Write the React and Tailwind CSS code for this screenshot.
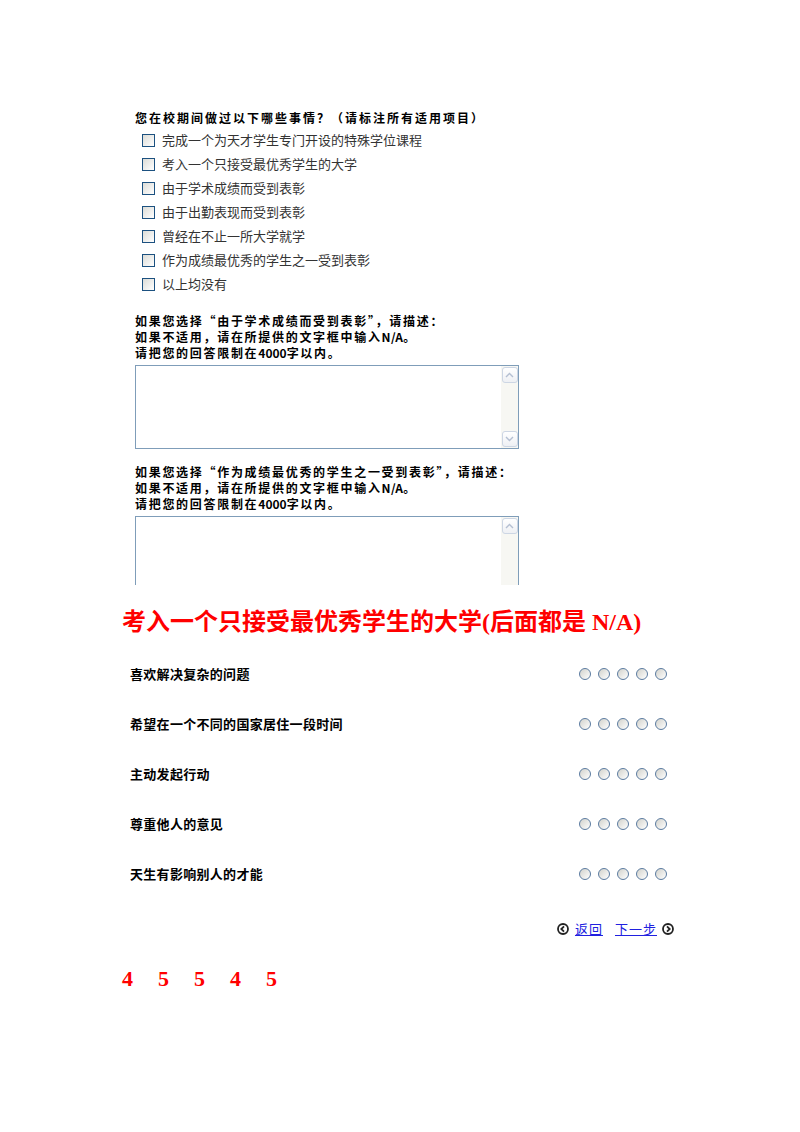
import React from "react";

const cjk = { fontFamily: '"Noto Sans CJK SC", "Liberation Sans", sans-serif' };
const serif = { fontFamily: '"Liberation Serif", "Noto Sans CJK SC", serif' };

function Checkbox() {
  return (
    <span className="inline-block w-[13px] h-[13px] border border-[#1c5180] bg-gradient-to-br from-[#dcdcd7] to-white shrink-0" />
  );
}

function Radio() {
  return (
    <span className="inline-block w-[12px] h-[12px] rounded-full border border-[#5b7ba0] bg-gradient-to-br from-[#d2d2cc] to-white shrink-0" />
  );
}

function ScrollBtn({ dir }) {
  return (
    <div className="w-[16px] h-[16px] rounded-[3px] border border-[#cdd6e4] bg-gradient-to-b from-white to-[#eef0f4] flex items-center justify-center">
      <svg width="9" height="6" viewBox="0 0 9 6">
        {dir === "up" ? (
          <path d="M1 5 L4.5 1.5 L8 5" fill="none" stroke="#b4bfd2" strokeWidth="1.4" />
        ) : (
          <path d="M1 1 L4.5 4.5 L8 1" fill="none" stroke="#b4bfd2" strokeWidth="1.4" />
        )}
      </svg>
    </div>
  );
}

function TextBox({ clipped }) {
  return (
    <div
      className={
        "w-[384px] flex justify-end border-[#7f9db9] " +
        (clipped ? "h-[69px] border-t border-l border-r" : "h-[84px] border")
      }
    >
      <div className="w-[17px] h-full bg-[#f7f7f3] flex flex-col justify-between items-center pt-[1px] pb-[1px]">
        <ScrollBtn dir="up" />
        {!clipped && <ScrollBtn dir="down" />}
      </div>
    </div>
  );
}

function NavIcon({ dir }) {
  return (
    <svg width="12" height="12" viewBox="0 0 12 12">
      <circle cx="6" cy="6" r="5" fill="white" stroke="#222" strokeWidth="1.8" />
      {dir === "left" ? (
        <path d="M7 3.3 L4.3 6 L7 8.7" fill="none" stroke="#222" strokeWidth="1.8" />
      ) : (
        <path d="M5 3.3 L7.7 6 L5 8.7" fill="none" stroke="#222" strokeWidth="1.8" />
      )}
    </svg>
  );
}

const items = [
  "完成一个为天才学生专门开设的特殊学位课程",
  "考入一个只接受最优秀学生的大学",
  "由于学术成绩而受到表彰",
  "由于出勤表现而受到表彰",
  "曾经在不止一所大学就学",
  "作为成绩最优秀的学生之一受到表彰",
  "以上均没有",
];

const ratings = [
  "喜欢解决复杂的问题",
  "希望在一个不同的国家居住一段时间",
  "主动发起行动",
  "尊重他人的意见",
  "天生有影响别人的才能",
];

function Instructions({ first }) {
  return (
    <div className="text-[12px] leading-[16px] font-bold text-black tracking-[1.7px]">
      <div>{first}</div>
      <div>
        如果不适用，请在所提供的文字框中输入<span className="tracking-[0.3px]">N/A</span>。
      </div>
      <div>
        请把您的回答限制在<span className="tracking-[0px]">4000</span>字以内。
      </div>
    </div>
  );
}

export default function App() {
  return (
    <div className="w-[800px] h-[1132px] bg-white overflow-hidden pt-[110px] pl-[122px]" style={cjk}>
      <div className="ml-[13px]">
        <div className="text-[12px] leading-[16px] font-bold text-black tracking-[2px]">
          您在校期间做过以下哪些事情？（请标注所有适用项目）
        </div>
        <div className="mt-[2px] flex flex-col">
          {items.map((t) => (
            <div key={t} className="h-[24px] flex items-center">
              <span className="ml-[7px]"><Checkbox /></span>
              <span className="ml-[7px] text-[13px] leading-[16px] text-[#333]">{t}</span>
            </div>
          ))}
        </div>

        <div className="mt-[17px]">
          <Instructions first="如果您选择“由于学术成绩而受到表彰”，请描述：" />
        </div>
        <div className="mt-[4px]">
          <TextBox />
        </div>

        <div className="mt-[15px]">
          <Instructions first="如果您选择“作为成绩最优秀的学生之一受到表彰”，请描述：" />
        </div>
        <div className="mt-[4px]">
          <TextBox clipped />
        </div>
      </div>

      <div className="mt-[22px] text-[24px] leading-[30px] font-bold text-[#ff0000]" style={serif}>
        考入一个只接受最优秀学生的大学(后面都是 N/A)
      </div>

      <div className="mt-[12px] flex flex-col w-[537px] ml-[8px]">
        {ratings.map((r) => (
          <div key={r} className="h-[50px] flex items-center justify-between">
            <span className="text-[13px] leading-[16px] font-bold text-black tracking-[0.3px]">{r}</span>
            <div className="flex gap-[7px]">
              {[0, 1, 2, 3, 4].map((i) => (
                <Radio key={i} />
              ))}
            </div>
          </div>
        ))}
      </div>

      <div className="mt-[20px] h-[20px] w-[552px] flex items-center justify-end text-[13px] leading-[16px] tracking-[1px]">
        <NavIcon dir="left" />
        <a className="ml-[6px] text-[#2020e0] underline">返回</a>
        <a className="ml-[12px] text-[#2020e0] underline">下一步</a>
        <span className="ml-[5px]"><NavIcon dir="right" /></span>
      </div>

      <div className="mt-[26px] flex text-[22px] leading-[28px] font-bold text-[#ff0000]" style={serif}>
        {["4", "5", "5", "4", "5"].map((n, i) => (
          <span key={i} className="w-[36px]">{n}</span>
        ))}
      </div>
    </div>
  );
}
